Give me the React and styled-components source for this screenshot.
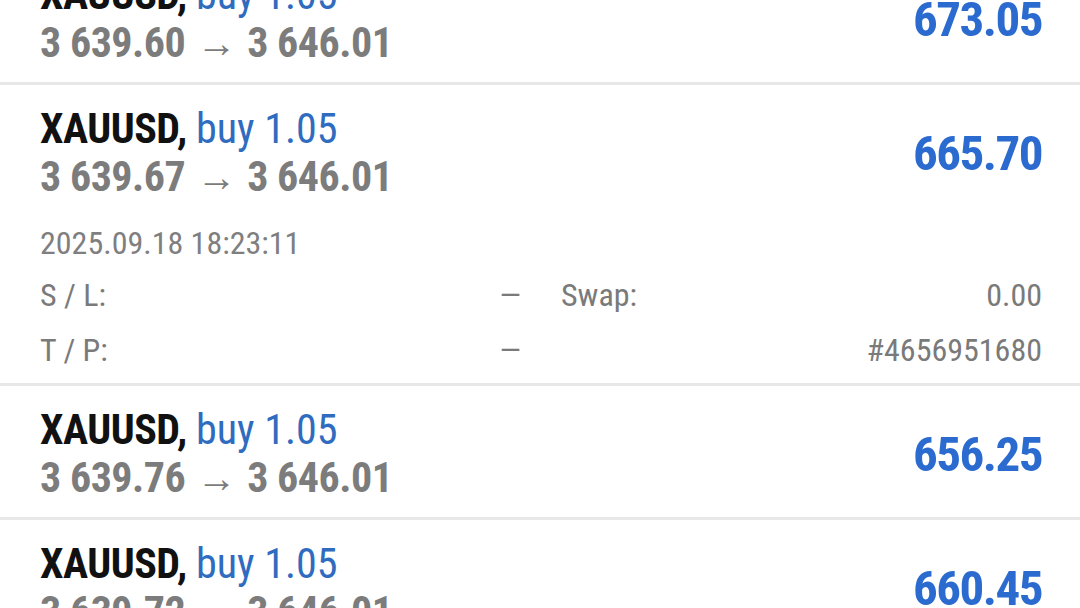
import React from 'react'
import styled, { createGlobalStyle } from 'styled-components'

const GlobalStyle = createGlobalStyle`
    html, body {
        margin: 0;
        background: #ffffff;
        overflow: hidden;
    }
    body {
        font-family: "Roboto Condensed", Roboto, "Liberation Sans", sans-serif;
        font-stretch: condensed;
    }
`

const List = styled.div`
    width: 1080px;
    height: 608px;
    overflow: hidden;
`
const Scroller = styled.div`
    margin-top: -49px;
`
const Row = styled.div`
    padding: 20px 38px ${p => (p.$open ? '12px' : '15px')} 40px;
    border-bottom: 3px solid #e8e8e8;
`
const Head = styled.div`
    display: flex;
    justify-content: space-between;
    align-items: center;
`
const Title = styled.div`
    font-size: 42px;
    line-height: 48px;
    color: #111111;
    font-weight: 700;
    letter-spacing: -0.5px;
`
const Side = styled.span`
    color: #2f6cc0;
    font-weight: 400;
    letter-spacing: 0;
`
const Prices = styled.div`
    font-size: 42px;
    line-height: 47px;
    color: #7c7c7c;
    font-weight: 700;
    letter-spacing: -0.5px;
`
const Arrow = styled.span`
    font-weight: 400;
    font-size: 40px;
    margin: 0 2px;
`
const Profit = styled.div`
    font-size: 49px;
    font-weight: 700;
    color: #2b6bcf;
    letter-spacing: -1.5px;
`
const Date = styled.div`
    margin-top: 23px;
    font-size: 32px;
    color: #7f7f7f;
`
const Details = styled.div`
    display: grid;
    grid-template-columns: 1fr 1fr;
    column-gap: 40px;
    row-gap: 13px;
    margin-top: 12px;
`
const Field = styled.div`
    display: flex;
    justify-content: space-between;
    font-size: 32px;
    line-height: 42px;
    color: #7a7a7a;
`

const trades = [
    { open: '3 639.60', close: '3 646.01', profit: '673.05' },
    {
        open: '3 639.67', close: '3 646.01', profit: '665.70',
        time: '2025.09.18 18:23:11', swap: '0.00', ticket: '#4656951680',
    },
    { open: '3 639.76', close: '3 646.01', profit: '656.25' },
    { open: '3 639.72', close: '3 646.01', profit: '660.45' },
]

const App = () => {
    return (
        <List>
            <GlobalStyle />
            <Scroller>
                {trades.map((t, i) => (
                    <Row key={i} $open={!!t.time}>
                        <Head>
                            <div>
                                <Title>XAUUSD, <Side>buy 1.05</Side></Title>
                                <Prices>{t.open} <Arrow>→</Arrow> {t.close}</Prices>
                            </div>
                            <Profit>{t.profit}</Profit>
                        </Head>
                        {t.time && (
                            <>
                                <Date>{t.time}</Date>
                                <Details>
                                    <Field><span>S / L:</span><span>—</span></Field>
                                    <Field><span>Swap:</span><span>{t.swap}</span></Field>
                                    <Field><span>T / P:</span><span>—</span></Field>
                                    <Field><span></span><span>{t.ticket}</span></Field>
                                </Details>
                            </>
                        )}
                    </Row>
                ))}
            </Scroller>
        </List>
    )
}

export default App
